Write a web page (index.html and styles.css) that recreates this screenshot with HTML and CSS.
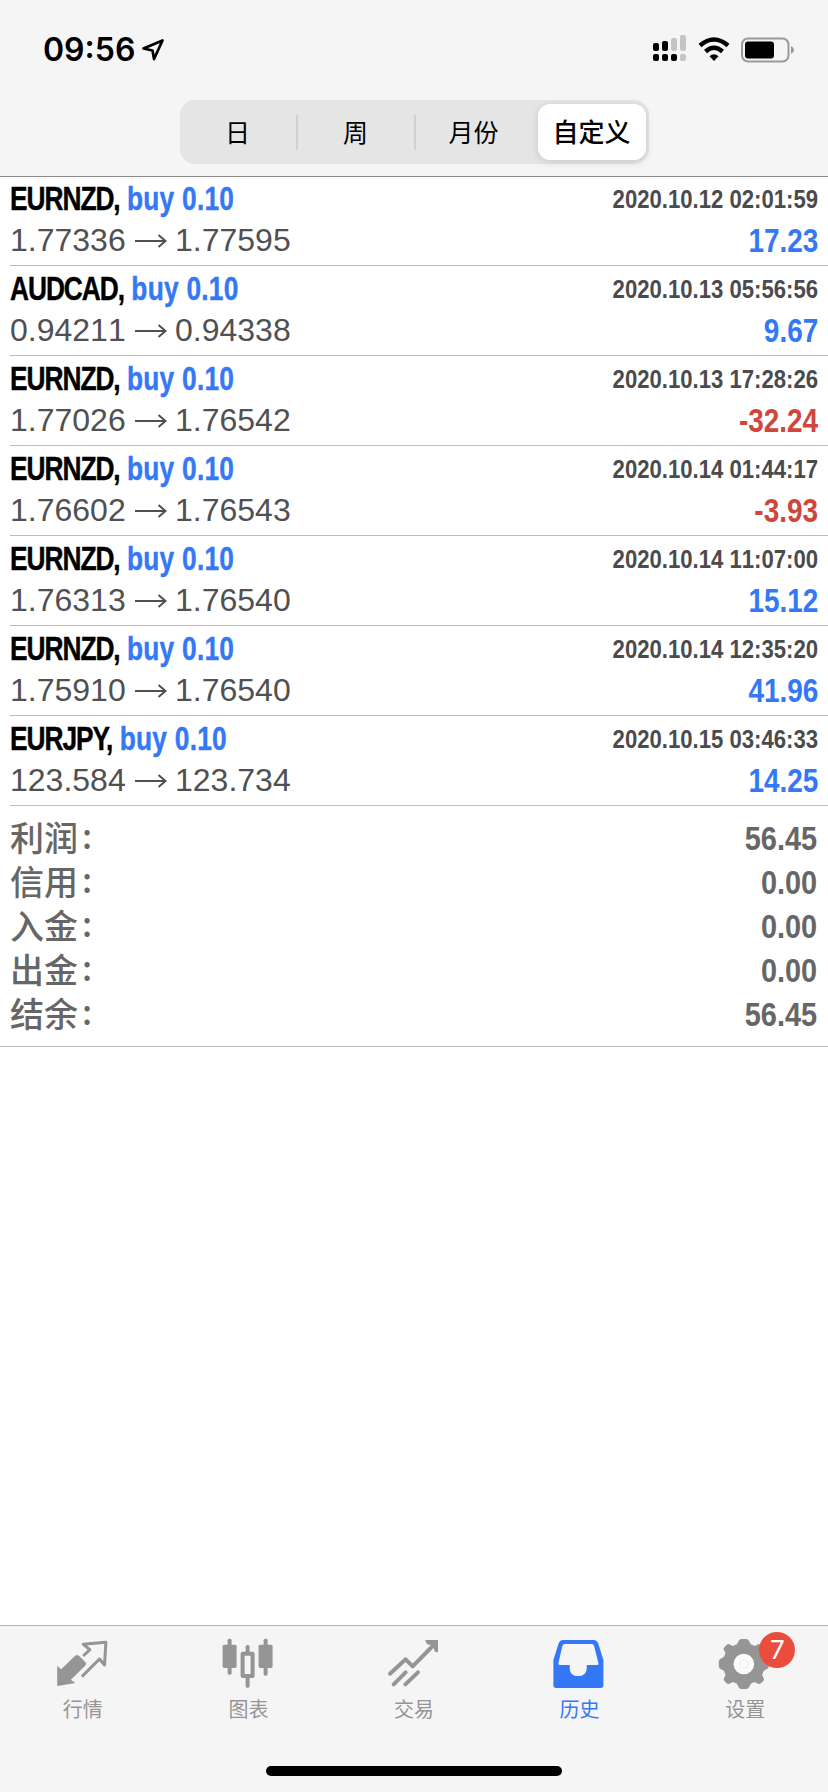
FILE: index.html
```html
<!DOCTYPE html>
<html lang="zh-CN">
<head>
<meta charset="utf-8">
<title>历史</title>
<link rel="stylesheet" href="styles.css">
</head>
<body>
<header class="header">
  <div class="status">
    <div class="status-left">
      <span class="clock">09:56</span>
      <svg class="location" viewBox="0 0 24 24"><path d="M2.500 10.500 21.500 2.500 13 21 11.500 12.500Z" fill="none" stroke="#000" stroke-width="2.700" stroke-linejoin="round"/></svg>
    </div>
    <div class="status-right">
      <svg class="signal" viewBox="0 0 34 28">
        <g fill="#000"><rect x="0" y="9" width="6" height="8" rx="2"/><rect x="9" y="7" width="6" height="10" rx="2"/><rect x="0" y="20" width="6" height="7" rx="2"/><rect x="9" y="20" width="6" height="7" rx="2"/><rect x="18" y="20" width="6" height="7" rx="2"/></g>
        <g fill="#c4c4c4"><rect x="18" y="4" width="6" height="13" rx="2"/><rect x="27" y="1" width="6" height="16" rx="2"/><rect x="27" y="20" width="6" height="7" rx="2"/></g>
      </svg>
      <svg class="wifi" viewBox="0 0 32 25"><g fill="none" stroke="#000" stroke-width="4.500"><path d="M2 8.500Q16-3.500 30 8.500"/><path d="M7.500 14.500Q16 7 24.500 14.500"/></g><path d="M11.500 19.200Q16 15.500 20.500 19.200L16 24Z"/></svg>
      <svg class="battery" viewBox="0 0 54 26"><rect x="1" y="1.500" width="46.500" height="23" rx="6" fill="none" stroke="#999" stroke-width="2"/><rect x="4" y="4.500" width="29" height="17" rx="3"/><path d="M50 9Q53 10.500 53 13T50 17Z" fill="#999"/></svg>
    </div>
  </div>
  <nav class="segments">
    <span class="segment">日</span><i class="rule"></i>
    <span class="segment">周</span><i class="rule"></i>
    <span class="segment">月份</span>
    <span class="segment segment-on">自定义</span>
  </nav>
</header>

<main class="content">
  <ul class="deals" id="deals"></ul>
  <dl class="totals">
    <div class="total"><dt>利润<b>:</b></dt><dd>56.45</dd></div>
    <div class="total"><dt>信用<b>:</b></dt><dd>0.00</dd></div>
    <div class="total"><dt>入金<b>:</b></dt><dd>0.00</dd></div>
    <div class="total"><dt>出金<b>:</b></dt><dd>0.00</dd></div>
    <div class="total"><dt>结余<b>:</b></dt><dd>56.45</dd></div>
  </dl>
</main>

<footer class="footer">
  <nav class="tabs">
    <div class="tab">
      <svg class="icon" viewBox="158.400 57 180 180"><path fill="currentColor" d="M171 153 183 163 225 122Q231 117 237 123L256 142Q260 147 255 152L212 194 225 204 173 213 171 211Z"/><path fill="none" stroke="currentColor" stroke-width="9" stroke-linejoin="round" d="M249 123 269 104 249 88 317 82 313 150 298 132 245 185"/></svg>
      <span class="tab-label">行情</span>
    </div>
    <div class="tab">
      <svg class="icon" viewBox="655.200 57 180 180"><g fill="currentColor"><rect x="669" y="89" width="42" height="70" rx="5"/><rect x="684" y="71" width="12" height="108" rx="5"/><rect x="777" y="89" width="42" height="70" rx="5"/><rect x="792" y="71" width="12" height="111" rx="5"/><rect x="738" y="90" width="12" height="25" rx="5"/><rect x="738" y="183" width="12" height="35" rx="5"/></g><rect x="729" y="116" width="30" height="67" fill="none" stroke="currentColor" stroke-width="12" stroke-linejoin="round"/></svg>
      <span class="tab-label">图表</span>
    </div>
    <div class="tab">
      <svg class="icon" viewBox="0 0 180 180"><g fill="none" stroke="currentColor" stroke-width="12" stroke-linecap="round" stroke-linejoin="round"><path d="M18 119 65 76 86 97 155 27M29 151 65 115M64 151 102 115"/></g><path fill="currentColor" d="M124 18H162V54L156 55Q150 52 150 46V32H133Q126 30 124 18Z"/></svg>
      <span class="tab-label">交易</span>
    </div>
    <div class="tab tab-on">
      <svg class="icon" viewBox="406.800 57 180 180"><path fill="currentColor" fill-rule="evenodd" d="M445 75H539Q547 75 551 84L567 135V211Q567 219 559 219H425Q417 219 417 211V135L433 84Q437 75 445 75ZM451 87Q446 87 444 92L432 145Q431 150 436 150H466V161Q467 183 491 183T517 161V150H549Q554 150 552 145L539 92Q537 87 532 87Z"/></svg>
      <span class="tab-label">历史</span>
    </div>
    <div class="tab">
      <svg class="icon" viewBox="903.600 57 180 180"><path fill="currentColor" d="M973 80Q976 72 983 72H997Q1004 72 1007 80L1011 88 1023 93 1033 88Q1037 86 1041 90L1047 96Q1051 100 1049 104L1045 115 1050 126 1060 131Q1065 134 1065 139V154Q1065 159 1060 162L1050 167 1045 179 1050 191Q1051 195 1048 199L1041 205Q1037 208 1033 206L1022 201 1011 206 1006 216Q1003 222 997 222H983Q977 222 974 216L969 206 958 201 946 206Q942 208 938 205L932 198Q929 195 930 191L935 179 930 167 920 162Q915 159 915 154V139Q915 134 920 131L930 126 935 115 930 104Q928 100 932 96L938 90Q942 86 946 88L957 93 969 88Z"/><circle cx="990" cy="147" r="31" fill="#fbfbfb"/><circle cx="990" cy="147" r="13" fill="none" stroke="#f1f1f1" stroke-width="4"/></svg>
      <span class="badge">7</span>
      <span class="tab-label">设置</span>
    </div>
  </nav>
  <div class="home"></div>
</footer>
<script src="deals.js"></script>
</body>
</html>
```
FILE: styles.css
```css
* { box-sizing: border-box; margin: 0; padding: 0; }
body {
  width: 828px;
  height: 1792px;
  display: flex;
  flex-direction: column;
  overflow: hidden;
  background: #fff;
  color: #000;
  font-family: "Liberation Sans", "Noto Sans CJK SC", sans-serif;
}
.header {
  height: 177px;
  flex: none;
  background: #f5f5f5;
  border-bottom: 1px solid #8c8c8c;
}
.status { height: 100px; display: flex; justify-content: space-between; padding: 30px 33px 0 43px; }
.status-left, .status-right { display: flex; align-items: flex-start; }
.clock { font: 600 32px/40px Inter, sans-serif; width: 98px; white-space: nowrap; }
.location { width: 24px; height: 24px; margin-top: 8px; }
.signal { width: 34px; height: 28px; margin: 4px 11px 0 0; }
.wifi { width: 32px; height: 25px; margin: 7px 11px 0 0; }
.battery { width: 54px; height: 26px; margin-top: 7px; }

.segments {
  width: 469px;
  height: 64px;
  margin: 0 auto;
  padding: 4px 3px 4px 0;
  display: flex;
  align-items: center;
  background: #e5e5e6;
  border-radius: 15px;
}
.segment { flex: 1; height: 56px; text-align: center; font: 400 25px/54px "Noto Sans CJK SC", sans-serif; }
.segment-on {
  flex: 0 0 108px;
  margin-left: 6px;
  background: #fff;
  border-radius: 12px;
  font-size: 26px;
  font-weight: 500;
  box-shadow: 0 2px 8px rgba(0, 0, 0, .12);
}
.rule { width: 2px; height: 35px; background: #d0d0d2; }

.content { flex: 1; }
.deals { list-style: none; padding-left: 10px; }
.deal { height: 90px; padding: 3px 10px 0 0; border-bottom: 1px solid #bcbcbc; }
.deal:first-child { height: 89px; padding-top: 2px; }
.deal-top, .deal-bottom { display: flex; justify-content: space-between; height: 41px; line-height: 41px; white-space: nowrap; }
.deal-bottom { padding-top: 1px; }
.title { font-weight: 700; font-size: 32.500px; transform: scaleX(.81); transform-origin: 0 50%; -webkit-text-stroke: .4px; }
.symbol { letter-spacing: -1.300px; }
.action { color: #3478f6; letter-spacing: .3px; }
.time { font-weight: 700; font-size: 26.500px; color: #4b4b4d; font-kerning: none; transform: scaleX(.835); transform-origin: 100% 50%; }
.prices { display: flex; align-items: center; height: 39px; line-height: 39px; font-size: 32px; font-kerning: none; color: #505052; }
.price { width: 117px; }
.arrow { width: 32px; height: 16px; margin: 0 8px 0 8px; }
.profit { font-weight: 700; font-size: 32.500px; color: #3478f6; font-kerning: none; transform: scaleX(.86); transform-origin: 100% 50%; }
.loss { color: #d0463b; }

.totals { height: 241px; padding: 10px 11px 0 10px; border-bottom: 1px solid #bcbcbc; color: #666; }
.total { display: flex; justify-content: space-between; height: 44px; line-height: 44px; }
.total dt { display: flex; font: 500 34px/42px "Noto Sans CJK SC", sans-serif; }
.total b { font-weight: 500; margin: -2px 0 0 4px; }
.total dd { font-weight: 700; font-size: 34px; transform: scaleX(.85); transform-origin: 100% 50%; }

.footer { height: 167px; flex: none; background: #f5f5f5; border-top: 1px solid #b2b2b2; }
.tabs { display: flex; padding-top: 8px; height: 140px; }
.tab { position: relative; flex: 1; display: flex; flex-direction: column; align-items: center; color: #959595; }
.tab-on { color: #3478f6; }
.icon { width: 60px; height: 60px; }
.tab-label { font: 400 20px/30px "Noto Sans CJK SC", sans-serif; }
.badge {
  position: absolute;
  left: 97px;
  top: -2px;
  width: 36px;
  height: 36px;
  border-radius: 50%;
  background: #eb4d3d;
  color: #fff;
  font: 400 26px/36px Inter, sans-serif;
  text-align: center;
}
.home { width: 296px; height: 10px; margin: 0 auto; border-radius: 5px; background: #000; }
```
FILE: deals.js
```js
const deals = [
  ["EURNZD", "1.77336", "1.77595", "2020.10.12 02:01:59", "17.23"],
  ["AUDCAD", "0.94211", "0.94338", "2020.10.13 05:56:56", "9.67"],
  ["EURNZD", "1.77026", "1.76542", "2020.10.13 17:28:26", "-32.24"],
  ["EURNZD", "1.76602", "1.76543", "2020.10.14 01:44:17", "-3.93"],
  ["EURNZD", "1.76313", "1.76540", "2020.10.14 11:07:00", "15.12"],
  ["EURNZD", "1.75910", "1.76540", "2020.10.14 12:35:20", "41.96"],
  ["EURJPY", "123.584", "123.734", "2020.10.15 03:46:33", "14.25"]
];
document.getElementById("deals").innerHTML = deals.map(([symbol, open, close, time, profit]) => `
  <li class="deal">
    <div class="deal-top">
      <div class="title"><span class="symbol">${symbol},</span> <span class="action">buy 0.10</span></div>
      <time class="time">${time}</time>
    </div>
    <div class="deal-bottom">
      <div class="prices">
        <span class="price">${open}</span>
        <svg class="arrow" viewBox="0 0 32 16"><path d="M0 8H30M23.500 2 30.500 8 23.500 14" fill="none" stroke="#505052" stroke-width="2"/></svg>
        <span class="price">${close}</span>
      </div>
      <span class="profit ${profit < 0 ? "loss" : ""}">${profit}</span>
    </div>
  </li>`).join("");
```
